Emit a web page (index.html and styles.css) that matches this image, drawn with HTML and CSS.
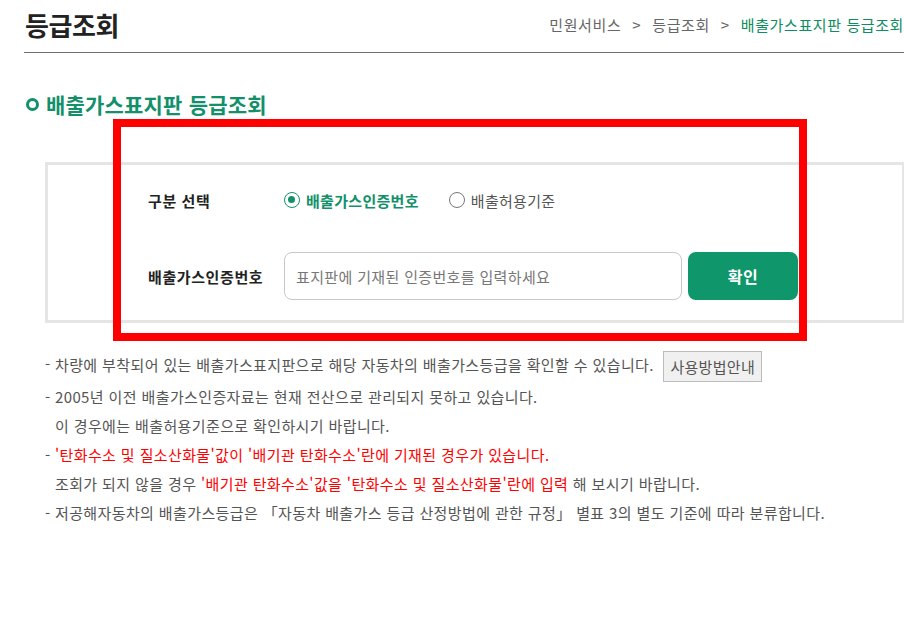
FILE: index.html
```html
<!DOCTYPE html>
<html lang="ko">
<head>
<meta charset="utf-8">
<title>등급조회</title>
<link rel="stylesheet" href="styles.css">
</head>
<body>
<div class="page">
  <header class="header">
    <h1 class="page-title">등급조회</h1>
    <nav class="crumbs">
      <span>민원서비스</span><span class="sep">&gt;</span><span>등급조회</span><span class="sep">&gt;</span><span class="crumb-current">배출가스표지판 등급조회</span>
    </nav>
  </header>

  <h2 class="section-title"><span class="ring"></span>배출가스표지판 등급조회</h2>

  <div class="search-box">
    <div class="row row-radio">
      <div class="label">구분 선택</div>
      <label class="radio checked"><span class="radio-mark"></span>배출가스인증번호</label>
      <label class="radio"><span class="radio-mark"></span>배출허용기준</label>
    </div>
    <div class="row row-input">
      <div class="label">배출가스인증번호</div>
      <div class="input">표지판에 기재된 인증번호를 입력하세요</div>
      <button class="btn-ok" type="button">확인</button>
    </div>
  </div>

  <div class="notes">
    <div class="note first"><span class="dash">-</span><span class="txt">차량에 부착되어 있는 배출가스표지판으로 해당 자동차의 배출가스등급을 확인할 수 있습니다. <button class="btn-guide" type="button">사용방법안내</button></span></div>
    <div class="note"><span class="dash">-</span><span class="txt">2005년 이전 배출가스인증자료는 현재 전산으로 관리되지 못하고 있습니다.<br>이 경우에는 배출허용기준으로 확인하시기 바랍니다.</span></div>
    <div class="note"><span class="dash">-</span><span class="txt"><span class="red">'탄화수소 및 질소산화물'값이 '배기관 탄화수소'란에 기재된 경우가 있습니다.</span><br>조회가 되지 않을 경우 <span class="red">'배기관 탄화수소'값을 '탄화수소 및 질소산화물'란에 입력</span> 해 보시기 바랍니다.</span></div>
    <div class="note"><span class="dash">-</span><span class="txt">저공해자동차의 배출가스등급은 「자동차 배출가스 등급 산정방법에 관한 규정」 별표 3의 별도 기준에 따라 분류합니다.</span></div>
  </div>

  <div class="highlight"></div>
</div>
</body>
</html>
```

FILE: styles.css
```css
html, body {
  margin: 0;
  padding: 0;
  background: #fff;
}
body {
  font-family: "Noto Sans CJK KR", "Noto Sans", sans-serif;
  color: #555;
}
.page {
  position: relative;
  width: 904px;
  height: 618px;
  overflow: hidden;
}
.header {
  margin-left: 24px;
  height: 52px;
  border-bottom: 1px solid #707070;
  display: flex;
  justify-content: space-between;
  align-items: center;
}
.page-title {
  margin: 0 0 2px 1px;
  font-size: 26px;
  font-weight: 700;
  letter-spacing: -0.4px;
  color: #222;
  line-height: 1;
}
.crumbs {
  font-size: 15px;
  color: #666;
  letter-spacing: 0.6px;
  display: flex;
  align-items: center;
  white-space: nowrap;
  margin-top: -4px;
}
.sep {
  margin: 0 11px;
}
.crumb-current {
  color: #0e8c62;
}
.section-title {
  margin: 39px 0 0 26px;
  height: 24px;
  display: flex;
  align-items: center;
  font-size: 21px;
  font-weight: 700;
  letter-spacing: 0.2px;
  color: #11906a;
}
.ring {
  width: 13px;
  height: 13px;
  box-sizing: border-box;
  border: 3.5px solid #11906a;
  border-radius: 50%;
  margin-right: 7px;
}
.search-box {
  margin: 46px 0 0 45px;
  border: 3px solid #e5e5e5;
  border-right-width: 2px;
  padding: 20px 0 20px 100px;
  display: flex;
  flex-direction: column;
  gap: 37px;
}
.row {
  display: flex;
  align-items: center;
}
.row-radio {
  height: 30px;
}
.row-input {
  height: 48px;
}
.label {
  width: 136px;
  font-size: 15px;
  font-weight: 700;
  color: #222;
  letter-spacing: 0.6px;
}
.radio {
  display: flex;
  align-items: center;
  font-size: 15px;
  color: #555;
  letter-spacing: 0.3px;
  margin-right: 30px;
}
.radio.checked {
  color: #11906a;
  font-weight: 700;
}
.radio-mark {
  width: 16px;
  height: 16px;
  box-sizing: border-box;
  border: 1px solid #777;
  border-radius: 50%;
  margin-right: 6px;
  position: relative;
}
.radio.checked .radio-mark {
  border: 1.5px solid #11906a;
}
.radio.checked .radio-mark::after {
  content: "";
  position: absolute;
  left: 3px;
  top: 3px;
  width: 7px;
  height: 7px;
  border-radius: 50%;
  background: #11906a;
}
.input {
  width: 398px;
  height: 48px;
  box-sizing: border-box;
  border: 1px solid #c8c8c8;
  border-radius: 8px;
  padding-left: 11px;
  display: flex;
  align-items: center;
  font-size: 15px;
  color: #777;
  letter-spacing: 0.35px;
}
.btn-ok {
  margin-left: 6px;
  width: 110px;
  height: 48px;
  border: 0;
  border-radius: 8px;
  background: #10966b;
  color: #fff;
  font-family: inherit;
  font-size: 16px;
  font-weight: 700;
  letter-spacing: 0.5px;
}
.notes {
  margin: 26px 0 0 45px;
  font-size: 15px;
  line-height: 29px;
  color: #555;
  letter-spacing: 0.38px;
}
.note {
  display: flex;
}
.dash {
  width: 10px;
  flex: none;
}
.first .txt {
  line-height: 32px;
}
.red {
  color: #f00;
}
.btn-guide {
  margin-left: 5px;
  height: 31px;
  padding: 0 6px;
  border: 1px solid #bcbcbc;
  background: #f0f0f0;
  font-family: inherit;
  font-size: 15px;
  letter-spacing: 0.3px;
  color: #555;
  vertical-align: middle;
}
.highlight {
  position: absolute;
  left: 113px;
  top: 119px;
  width: 694px;
  height: 222px;
  box-sizing: border-box;
  border: 8px solid #ff0000;
  pointer-events: none;
}
```
